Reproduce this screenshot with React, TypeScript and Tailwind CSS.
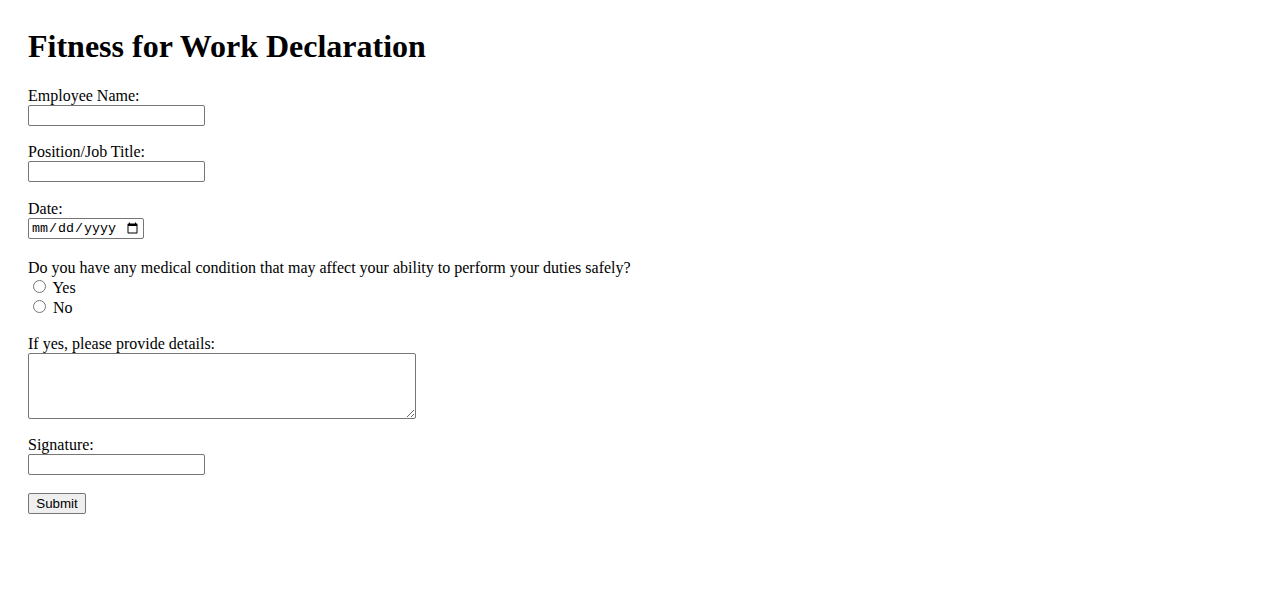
export default function App() {
  const fieldInput =
    'block w-[177px] h-[21px] bg-white border border-[#767676] rounded-[2px] px-[2px] py-[1px] text-[13.33px] font-["Liberation_Sans",Arial,sans-serif] outline-none';

  return (
    <div className="min-h-screen bg-white text-black px-[28px] pt-[28px] font-['Liberation_Serif','Times_New_Roman',serif] text-base leading-[normal]">
      <h1 className="text-[32px] font-bold leading-[normal] mb-[21.5px]">Fitness for Work Declaration</h1>

      <form onSubmit={(e) => e.preventDefault()}>
        <div className="mb-[17.6px]">
          <label className="block">Employee Name:</label>
          <input type="text" className={fieldInput} />
        </div>

        <div className="mb-[17.6px]">
          <label className="block">Position/Job Title:</label>
          <input type="text" className={fieldInput} />
        </div>

        <div className="mb-[20px]">
          <label className="block">Date:</label>
          <input
            type="date"
            className="block w-[116px] h-[21px] bg-white border border-[#767676] rounded-[2px] pl-[2px] pr-[2px] py-[1px] text-[13.33px] font-['Liberation_Mono','Courier_New',monospace] outline-none"
          />
        </div>

        <div className="mb-[18px]">
          <label className="block">Do you have any medical condition that may affect your ability to perform your duties safely?</label>
          <div>
            <input type="radio" name="condition" className="ml-[5px] mr-[3px] mt-[3px]" />{' '}Yes
          </div>
          <div>
            <input type="radio" name="condition" className="ml-[5px] mr-[3px] mt-[3px]" />{' '}No
          </div>
        </div>

        <div className="mb-[17.6px]">
          <label className="block">If yes, please provide details:</label>
          <textarea className="block w-[388px] h-[66px] bg-white border border-[#767676] rounded-[2px] px-[2px] py-[2px] text-[13.33px] font-['Liberation_Mono','Courier_New',monospace] outline-none resize" />
        </div>

        <div className="mb-[18px]">
          <label className="block">Signature:</label>
          <input type="text" className={fieldInput} />
        </div>

        <button
          type="submit"
          className="block w-[58px] h-[21px] bg-[#efefef] border border-[#767676] rounded-[2px] text-[13.33px] leading-none font-['Liberation_Sans',Arial,sans-serif] text-black"
        >
          Submit
        </button>
      </form>
    </div>
  );
}
